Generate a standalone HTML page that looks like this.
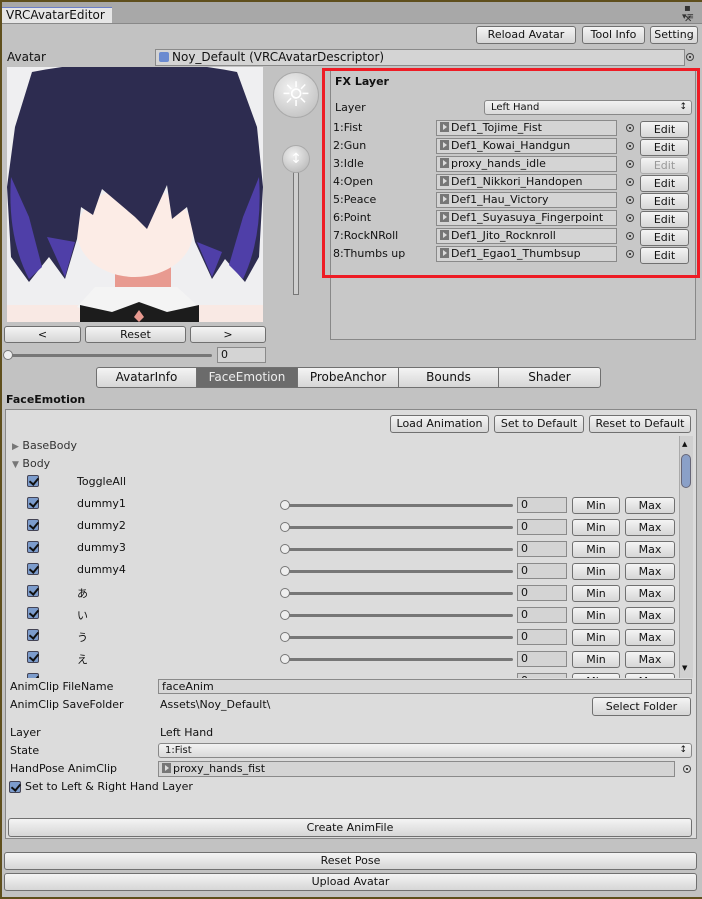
<!DOCTYPE html>
<html><head><meta charset="utf-8"><style>
*{box-sizing:border-box;margin:0;padding:0}
body{width:702px;height:899px;overflow:hidden;background:#5f4f1d;font-family:"DejaVu Sans","Liberation Sans","Noto Sans CJK JP",sans-serif;font-size:11px;color:#111;position:relative}
.a{position:absolute}
.btn{position:absolute;border:1px solid #707070;border-radius:3px;background:linear-gradient(#f4f4f4,#d6d6d6);text-align:center;line-height:15px;font-size:11px;white-space:nowrap;overflow:hidden}
.fld{position:absolute;border:1px solid #8a8a8a;background:#d4d4d4;line-height:14px;padding-left:3px;white-space:nowrap;overflow:hidden}
.dd{position:absolute;border:1px solid #888;border-radius:3px;background:linear-gradient(#f2f2f2,#dadada);line-height:13px;padding-left:6px;font-size:10px}
.dd:after{content:"\2195";position:absolute;right:4px;top:0;font-size:9px}
.ic{display:inline-block;width:9px;height:10px;background:#777;margin-right:2px;vertical-align:-1px;position:relative}
.ic:after{content:"";position:absolute;left:3px;top:2px;border-left:4px solid #ddd;border-top:3px solid transparent;border-bottom:3px solid transparent}
.pk{position:absolute;width:8px;height:8px;border:1px solid #444;border-radius:50%}
.pk:after{content:"";position:absolute;left:2px;top:2px;width:2px;height:2px;background:#444}
.cb{position:absolute;width:12px;height:12px;border:1px solid #445;background:#7c9ccc;border-radius:2px}
.cb:after{content:"";position:absolute;left:3px;top:0px;width:4px;height:7px;border:solid #111;border-width:0 2px 2px 0;transform:rotate(40deg)}
.sl{position:absolute;height:3px;background:#777;border-radius:2px}
.th{position:absolute;width:10px;height:10px;border-radius:50%;border:1px solid #777;background:#eee}
</style></head><body>
<div class="a" style="left:2px;top:2px;width:700px;height:895px;background:#c2c2c2"></div>
<div class="a" style="left:2px;top:2px;width:700px;height:22px;background:#a8a8a8"></div>
<div class="a" style="left:2px;top:7px;width:110px;height:17px;background:#e6e6e6;border-top:1px solid #6b7fc8;padding-left:4px;line-height:15px;font-size:12px">VRCAvatarEditor</div>
<div class="a" style="left:2px;top:23px;width:700px;height:1px;background:#888"></div>
<div class="a" style="left:684px;top:3px;font-size:10px;color:#333">▪ ✕</div>
<div class="a" style="left:682px;top:12px;font-size:9px;color:#333">▾≡</div>
<div class="btn" style="left:476px;top:26px;width:100px;height:18px">Reload Avatar</div>
<div class="btn" style="left:582px;top:26px;width:63px;height:18px">Tool Info</div>
<div class="btn" style="left:650px;top:26px;width:48px;height:18px">Setting</div>
<div class="a" style="left:7px;top:50px;font-size:12px">Avatar</div>
<div class="fld" style="left:155px;top:49px;width:530px;height:17px;font-size:12px"><span style="display:inline-block;width:10px;height:10px;background:#6a8ad0;border-radius:2px;margin-right:3px;vertical-align:-1px"></span>Noy_Default (VRCAvatarDescriptor)</div>
<div class="pk" style="left:686px;top:53px"></div>
<svg class="a" style="left:7px;top:67px" width="256" height="255" viewBox="0 0 256 255">
<rect width="256" height="255" fill="#efeff1"/>
<rect x="0" y="238" width="256" height="17" fill="#f9e9e4"/>
<rect x="108" y="195" width="56" height="35" fill="#e89a90"/>
<ellipse cx="128" cy="165" rx="58" ry="45" fill="#fcece6"/>
<path d="M88 220 L170 220 L192 240 L165 250 L132 240 L100 250 L70 240 Z" fill="#f4f4f4"/>
<path d="M73 238 L105 245 L132 235 L160 245 L192 238 L192 255 L73 255 Z" fill="#1c1c1c"/>
<path d="M132 243 L137 250 L132 255 L127 250 Z" fill="#e89a90"/>
<path d="M25 5 Q128 -15 230 5 L250 60 L256 120 L252 190 L238 215 L218 192 L205 212 L188 175 L180 140 L165 152 L160 118 L140 162 L128 150 L95 122 L86 148 L74 140 L70 172 L58 212 L42 190 L22 215 L4 190 L0 120 L8 60 Z" fill="#2d2c50"/>
<path d="M4 110 Q0 170 22 212 L35 200 L22 150 Z" fill="#4f3fa8"/>
<path d="M40 170 L58 210 L68 175 Z" fill="#4f3fa8"/>
<path d="M252 110 Q256 170 236 212 L222 198 L236 150 Z" fill="#4f3fa8"/>
<path d="M190 175 L205 210 L215 185 Z" fill="#4f3fa8"/>
</svg>
<div class="a" style="left:273px;top:72px;width:46px;height:46px;border-radius:50%;background:radial-gradient(circle at 40% 35%,#f2f2f2,#b8b8b8);border:1px solid #aaa;color:#fff;font-size:34px;line-height:44px;text-align:center">☼</div>
<div class="a" style="left:293px;top:172px;width:6px;height:123px;background:#cfcfcf;border:1px solid #777"></div>
<div class="a" style="left:282px;top:145px;width:28px;height:28px;border-radius:50%;background:radial-gradient(circle at 40% 35%,#f0f0f0,#b0b0b0);border:1px solid #aaa;color:#fff;text-align:center;line-height:26px;font-size:14px">↕</div>
<div class="a" style="left:330px;top:70px;width:366px;height:270px;border:1px solid #888;background:#c8c8c8"></div>
<div class="a" style="left:322px;top:68px;width:378px;height:210px;border:3px solid #ee1c25"></div>
<div class="a" style="left:335px;top:75px;font-weight:bold;font-size:11px">FX Layer</div>
<div class="a" style="left:335px;top:101px">Layer</div>
<div class="dd" style="left:484px;top:100px;width:208px;height:15px">Left Hand</div>
<div class="a" style="left:333px;top:119px;line-height:18px">1:Fist<br>2:Gun<br>3:Idle<br>4:Open<br>5:Peace<br>6:Point<br>7:RockNRoll<br>8:Thumbs up</div>
<div class="fld" style="left:436px;top:120px;width:181px;height:16px"><i class="ic"></i>Def1_Tojime_Fist</div>
<div class="fld" style="left:436px;top:138px;width:181px;height:16px"><i class="ic"></i>Def1_Kowai_Handgun</div>
<div class="fld" style="left:436px;top:156px;width:181px;height:16px"><i class="ic"></i>proxy_hands_idle</div>
<div class="fld" style="left:436px;top:174px;width:181px;height:16px"><i class="ic"></i>Def1_Nikkori_Handopen</div>
<div class="fld" style="left:436px;top:192px;width:181px;height:16px"><i class="ic"></i>Def1_Hau_Victory</div>
<div class="fld" style="left:436px;top:210px;width:181px;height:16px"><i class="ic"></i>Def1_Suyasuya_Fingerpoint</div>
<div class="fld" style="left:436px;top:228px;width:181px;height:16px"><i class="ic"></i>Def1_Jito_Rocknroll</div>
<div class="fld" style="left:436px;top:246px;width:181px;height:16px"><i class="ic"></i>Def1_Egao1_Thumbsup</div>
<div class="pk" style="left:626px;top:124px"></div><div class="pk" style="left:626px;top:142px"></div><div class="pk" style="left:626px;top:160px"></div><div class="pk" style="left:626px;top:178px"></div><div class="pk" style="left:626px;top:196px"></div><div class="pk" style="left:626px;top:214px"></div><div class="pk" style="left:626px;top:232px"></div><div class="pk" style="left:626px;top:250px"></div>
<div class="btn" style="left:640px;top:121px;width:49px;height:17px">Edit</div>
<div class="btn" style="left:640px;top:139px;width:49px;height:17px">Edit</div>
<div class="btn" style="left:640px;top:157px;width:49px;height:17px;color:#999;border-color:#aaa">Edit</div>
<div class="btn" style="left:640px;top:175px;width:49px;height:17px">Edit</div>
<div class="btn" style="left:640px;top:193px;width:49px;height:17px">Edit</div>
<div class="btn" style="left:640px;top:211px;width:49px;height:17px">Edit</div>
<div class="btn" style="left:640px;top:229px;width:49px;height:17px">Edit</div>
<div class="btn" style="left:640px;top:247px;width:49px;height:17px">Edit</div>
<div class="btn" style="left:4px;top:326px;width:77px;height:17px">&lt;</div>
<div class="btn" style="left:85px;top:326px;width:101px;height:17px">Reset</div>
<div class="btn" style="left:190px;top:326px;width:76px;height:17px">&gt;</div>
<div class="sl" style="left:6px;top:354px;width:206px"></div><div class="th" style="left:3px;top:350px"></div>
<div class="fld" style="left:217px;top:347px;width:49px;height:16px">0</div>
<div class="btn" style="left:96px;top:367px;width:101px;height:21px;border-radius:3px 0 0 3px;line-height:19px;font-size:12px">AvatarInfo</div>
<div class="btn" style="left:196px;top:367px;width:102px;height:21px;border-radius:0;background:#6b6b6b;color:#eee;line-height:19px;font-size:12px">FaceEmotion</div>
<div class="btn" style="left:297px;top:367px;width:102px;height:21px;border-radius:0;line-height:19px;font-size:12px">ProbeAnchor</div>
<div class="btn" style="left:398px;top:367px;width:101px;height:21px;border-radius:0;line-height:19px;font-size:12px">Bounds</div>
<div class="btn" style="left:498px;top:367px;width:103px;height:21px;border-radius:0 3px 3px 0;line-height:19px;font-size:12px">Shader</div>
<div class="a" style="left:6px;top:393px;font-weight:bold">FaceEmotion</div>
<div class="a" style="left:5px;top:409px;width:692px;height:430px;border:1px solid #888;background:#dcdcdc"></div>
<div class="btn" style="left:390px;top:415px;width:99px;height:18px">Load Animation</div>
<div class="btn" style="left:494px;top:415px;width:90px;height:18px">Set to Default</div>
<div class="btn" style="left:589px;top:415px;width:102px;height:18px">Reset to Default</div>
<div class="a" style="left:679px;top:436px;width:14px;height:242px;background:#d0d0d0;border-left:1px solid #aaa"></div>
<div class="a" style="left:682px;top:440px;font-size:7px">▲</div><div class="a" style="left:682px;top:664px;font-size:7px">▼</div>
<div class="a" style="left:681px;top:454px;width:10px;height:34px;border-radius:5px;background:#8aa0c8;border:1px solid #667"></div>
<div class="a" style="left:12px;top:439px;color:#333"><span style="font-size:9px;color:#777">▶</span> BaseBody</div>
<div class="a" style="left:12px;top:457px;color:#333"><span style="font-size:9px;color:#777">▼</span> Body</div>
<div class="cb" style="left:27px;top:475px"></div><div class="a" style="left:77px;top:475px">ToggleAll</div>
<div style="position:absolute;left:0;top:0;width:702px;height:678px;overflow:hidden">
<div class="a" style="left:0;top:497px;width:702px">
<div class="cb" style="left:27px;top:0"></div><div class="a" style="left:77px;top:0">dummy1</div>
<div class="sl" style="left:285px;top:7px;width:228px"></div><div class="th" style="left:280px;top:3px"></div>
<div class="fld" style="left:517px;top:0;width:50px;height:16px">0</div>
<div class="btn" style="left:572px;top:0;width:48px;height:17px">Min</div><div class="btn" style="left:625px;top:0;width:50px;height:17px">Max</div></div>
<div class="a" style="left:0;top:519px;width:702px">
<div class="cb" style="left:27px;top:0"></div><div class="a" style="left:77px;top:0">dummy2</div>
<div class="sl" style="left:285px;top:7px;width:228px"></div><div class="th" style="left:280px;top:3px"></div>
<div class="fld" style="left:517px;top:0;width:50px;height:16px">0</div>
<div class="btn" style="left:572px;top:0;width:48px;height:17px">Min</div><div class="btn" style="left:625px;top:0;width:50px;height:17px">Max</div></div>
<div class="a" style="left:0;top:541px;width:702px">
<div class="cb" style="left:27px;top:0"></div><div class="a" style="left:77px;top:0">dummy3</div>
<div class="sl" style="left:285px;top:7px;width:228px"></div><div class="th" style="left:280px;top:3px"></div>
<div class="fld" style="left:517px;top:0;width:50px;height:16px">0</div>
<div class="btn" style="left:572px;top:0;width:48px;height:17px">Min</div><div class="btn" style="left:625px;top:0;width:50px;height:17px">Max</div></div>
<div class="a" style="left:0;top:563px;width:702px">
<div class="cb" style="left:27px;top:0"></div><div class="a" style="left:77px;top:0">dummy4</div>
<div class="sl" style="left:285px;top:7px;width:228px"></div><div class="th" style="left:280px;top:3px"></div>
<div class="fld" style="left:517px;top:0;width:50px;height:16px">0</div>
<div class="btn" style="left:572px;top:0;width:48px;height:17px">Min</div><div class="btn" style="left:625px;top:0;width:50px;height:17px">Max</div></div>
<div class="a" style="left:0;top:585px;width:702px">
<div class="cb" style="left:27px;top:0"></div><div class="a" style="left:77px;top:0">あ</div>
<div class="sl" style="left:285px;top:7px;width:228px"></div><div class="th" style="left:280px;top:3px"></div>
<div class="fld" style="left:517px;top:0;width:50px;height:16px">0</div>
<div class="btn" style="left:572px;top:0;width:48px;height:17px">Min</div><div class="btn" style="left:625px;top:0;width:50px;height:17px">Max</div></div>
<div class="a" style="left:0;top:607px;width:702px">
<div class="cb" style="left:27px;top:0"></div><div class="a" style="left:77px;top:0">い</div>
<div class="sl" style="left:285px;top:7px;width:228px"></div><div class="th" style="left:280px;top:3px"></div>
<div class="fld" style="left:517px;top:0;width:50px;height:16px">0</div>
<div class="btn" style="left:572px;top:0;width:48px;height:17px">Min</div><div class="btn" style="left:625px;top:0;width:50px;height:17px">Max</div></div>
<div class="a" style="left:0;top:629px;width:702px">
<div class="cb" style="left:27px;top:0"></div><div class="a" style="left:77px;top:0">う</div>
<div class="sl" style="left:285px;top:7px;width:228px"></div><div class="th" style="left:280px;top:3px"></div>
<div class="fld" style="left:517px;top:0;width:50px;height:16px">0</div>
<div class="btn" style="left:572px;top:0;width:48px;height:17px">Min</div><div class="btn" style="left:625px;top:0;width:50px;height:17px">Max</div></div>
<div class="a" style="left:0;top:651px;width:702px">
<div class="cb" style="left:27px;top:0"></div><div class="a" style="left:77px;top:0">え</div>
<div class="sl" style="left:285px;top:7px;width:228px"></div><div class="th" style="left:280px;top:3px"></div>
<div class="fld" style="left:517px;top:0;width:50px;height:16px">0</div>
<div class="btn" style="left:572px;top:0;width:48px;height:17px">Min</div><div class="btn" style="left:625px;top:0;width:50px;height:17px">Max</div></div>
<div class="a" style="left:0;top:673px;width:702px">
<div class="cb" style="left:27px;top:0"></div>
<div class="fld" style="left:517px;top:0;width:50px;height:16px">0</div>
<div class="btn" style="left:572px;top:0;width:48px;height:17px">Min</div><div class="btn" style="left:625px;top:0;width:50px;height:17px">Max</div></div>
</div>
<div class="a" style="left:10px;top:680px">AnimClip FileName</div>
<div class="fld" style="left:158px;top:679px;width:534px;height:15px;background:#d8d8d8">faceAnim</div>
<div class="a" style="left:10px;top:698px">AnimClip SaveFolder</div>
<div class="a" style="left:160px;top:698px">Assets\Noy_Default\</div>
<div class="btn" style="left:592px;top:697px;width:99px;height:19px;line-height:17px">Select Folder</div>
<div class="a" style="left:10px;top:726px">Layer</div><div class="a" style="left:160px;top:726px">Left Hand</div>
<div class="a" style="left:10px;top:744px">State</div>
<div class="dd" style="left:158px;top:743px;width:534px;height:15px">1:Fist</div>
<div class="a" style="left:10px;top:762px">HandPose AnimClip</div>
<div class="fld" style="left:158px;top:761px;width:517px;height:16px"><i class="ic"></i>proxy_hands_fist</div>
<div class="pk" style="left:683px;top:765px"></div>
<div class="cb" style="left:9px;top:781px"></div><div class="a" style="left:25px;top:780px">Set to Left &amp; Right Hand Layer</div>
<div class="btn" style="left:8px;top:818px;width:684px;height:19px;line-height:17px">Create AnimFile</div>
<div class="btn" style="left:4px;top:852px;width:693px;height:18px">Reset Pose</div>
<div class="btn" style="left:4px;top:873px;width:693px;height:18px">Upload Avatar</div>
</body></html>
